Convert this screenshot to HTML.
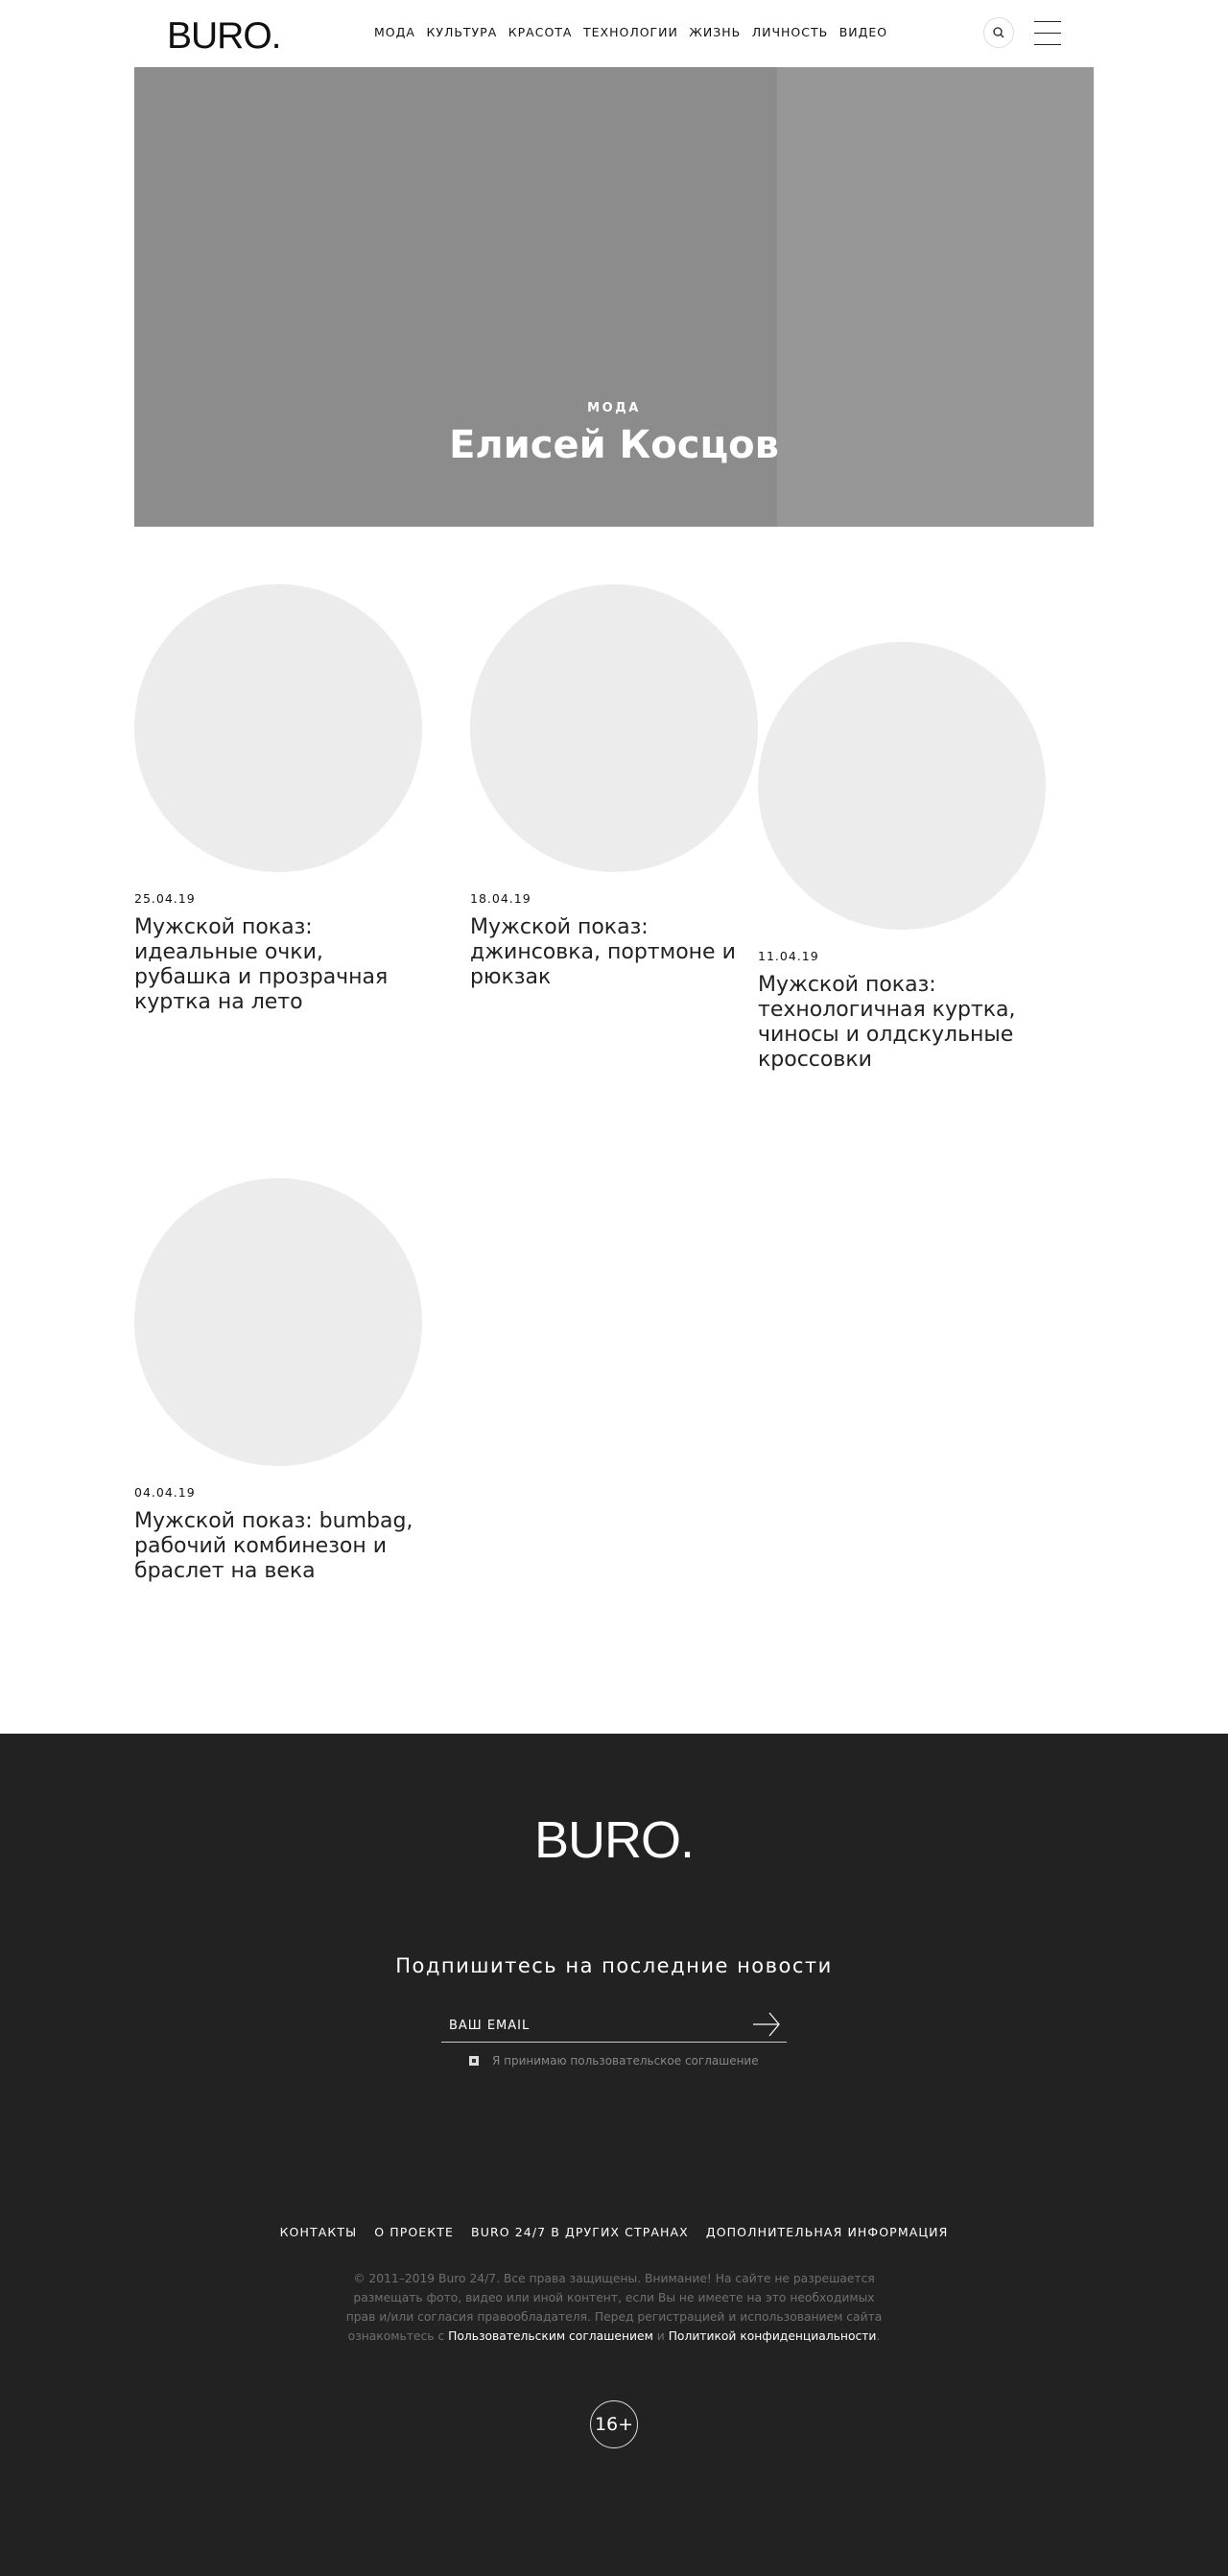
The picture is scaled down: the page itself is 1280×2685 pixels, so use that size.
<!DOCTYPE html>
<html><head><meta charset="utf-8"><style>
*{margin:0;padding:0;box-sizing:border-box}
body{width:1280px;height:2685px;background:#fff;font-family:"DejaVu Sans","Liberation Sans",sans-serif;color:#222;position:relative;overflow:hidden}
.abs{position:absolute}
.logo{font-family:"Liberation Sans",sans-serif;font-weight:300;letter-spacing:-1px}
.nav{left:390px;top:26px;font-size:12.5px;letter-spacing:1px;white-space:nowrap;color:#111}
.nav span{margin-right:11.5px}
.circ{width:300px;height:300px;border-radius:50%;background:#ececec}
.date{font-size:12.5px;letter-spacing:1px;color:#111}
.title{font-size:22px;line-height:26px;color:#222;width:300px}
footer{position:absolute;left:0;top:1807px;width:1280px;height:878px;background:#222}
</style></head><body>
<div class="abs logo" style="left:174px;top:16px;font-size:39px;color:#111">BURO.</div>
<div class="abs nav"><span>МОДА</span><span>КУЛЬТУРА</span><span>КРАСОТА</span><span>ТЕХНОЛОГИИ</span><span>ЖИЗНЬ</span><span>ЛИЧНОСТЬ</span><span>ВИДЕО</span></div>
<div class="abs" style="left:1025px;top:18px;width:32px;height:32px;border:1px solid #ddd;border-radius:50%">
<svg width="30" height="30" viewBox="0 0 30 30" style="position:absolute;left:0;top:0"><circle cx="14" cy="14" r="4" fill="none" stroke="#222" stroke-width="1.3"/><line x1="17" y1="17" x2="20" y2="20" stroke="#222" stroke-width="1.3"/></svg></div>
<div class="abs" style="left:1078px;top:22px;width:28px;height:1px;background:#222"></div>
<div class="abs" style="left:1078px;top:34px;width:28px;height:1px;background:#222"></div>
<div class="abs" style="left:1078px;top:46px;width:28px;height:1px;background:#222"></div>

<div class="abs" style="left:140px;top:70px;width:1000px;height:479px;background:#979797"></div>
<div class="abs" style="left:140px;top:70px;width:670px;height:479px;background:#8c8c8c"></div>
<div class="abs" style="left:140px;top:418px;width:1000px;text-align:center;color:#fff;font-size:13px;font-weight:bold;letter-spacing:2.5px">МОДА</div>
<div class="abs" style="left:140px;top:441px;width:1000px;text-align:center;color:#fff;font-size:40px;font-weight:bold">Елисей Косцов</div>

<div class="abs circ" style="left:140px;top:609px"></div>
<div class="abs date" style="left:140px;top:929px">25.04.19</div>
<div class="abs title" style="left:140px;top:954px">Мужской показ: идеальные очки, рубашка и прозрачная куртка на лето</div>

<div class="abs circ" style="left:490px;top:609px"></div>
<div class="abs date" style="left:490px;top:929px">18.04.19</div>
<div class="abs title" style="left:490px;top:954px">Мужской показ: джинсовка, портмоне и рюкзак</div>

<div class="abs circ" style="left:790px;top:669px"></div>
<div class="abs date" style="left:790px;top:989px">11.04.19</div>
<div class="abs title" style="left:790px;top:1014px">Мужской показ: технологичная куртка, чиносы и олдскульные кроссовки</div>

<div class="abs circ" style="left:140px;top:1228px"></div>
<div class="abs date" style="left:140px;top:1548px">04.04.19</div>
<div class="abs title" style="left:140px;top:1573px">Мужской показ: bumbag, рабочий комбинезон и браслет на века</div>

<footer>
<div class="abs logo" style="left:0;width:1280px;text-align:center;top:80px;font-size:54px;color:#fff">BURO.</div>
<div class="abs" style="left:0;width:1280px;text-align:center;top:230px;font-size:21px;letter-spacing:1.5px;color:#fff">Подпишитесь на последние новости</div>
<div class="abs" style="left:468px;top:297px;font-size:13px;letter-spacing:1px;color:#fff">ВАШ EMAIL</div>
<svg class="abs" style="left:780px;top:288px" width="36" height="30" viewBox="0 0 36 30"><line x1="5" y1="15" x2="32" y2="15" stroke="#fff" stroke-width="1.2"/><polyline points="22,3 32,15 22,27" fill="none" stroke="#fff" stroke-width="1.2"/></svg>
<div class="abs" style="left:460px;top:321px;width:360px;height:1px;background:#ccc"></div>
<div class="abs" style="left:489px;top:336px;width:10px;height:10px;background:#ddd"><div style="margin:3px;width:4px;height:4px;background:#333"></div></div>
<div class="abs" style="left:513px;top:334px;font-size:12px;color:#888">Я принимаю пользовательское соглашение</div>
<div class="abs" style="left:0;width:1280px;text-align:center;top:512px;font-size:12.5px;letter-spacing:1.1px;color:#fff;white-space:nowrap"><span style="margin-right:18px">КОНТАКТЫ</span><span style="margin-right:18px">О ПРОЕКТЕ</span><span style="margin-right:18px">BURO 24/7 В ДРУГИХ СТРАНАХ</span><span>ДОПОЛНИТЕЛЬНАЯ ИНФОРМАЦИЯ</span></div>
<div class="abs" style="left:0;width:1280px;text-align:center;top:558px;font-size:12.3px;line-height:20px;color:#6f6f6f;white-space:nowrap">© 2011–2019 Buro 24/7. Все права защищены. Внимание! На сайте не разрешается<br>размещать фото, видео или иной контент, если Вы не имеете на это необходимых<br>прав и/или согласия правообладателя. Перед регистрацией и использованием сайта<br>ознакомьтесь с <span style="color:#fff">Пользовательским соглашением</span> и <span style="color:#fff">Политикой конфиденциальности</span>.</div>
<div class="abs" style="left:615px;top:695px;width:50px;height:50px;border:1px solid #ddd;border-radius:50%;color:#fff;font-size:19px;line-height:48px;text-align:center">16+</div>
</footer>
</body></html>
